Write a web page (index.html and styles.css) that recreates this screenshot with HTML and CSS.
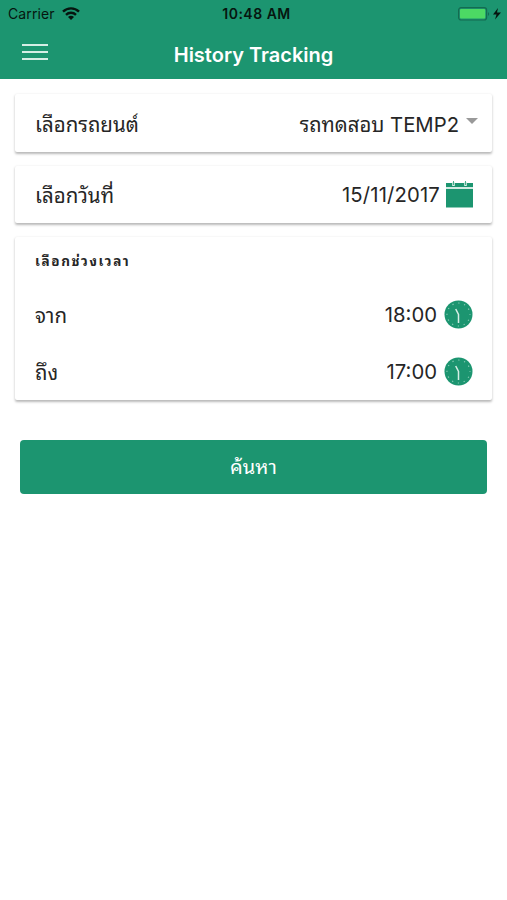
FILE: index.html
```html
<!DOCTYPE html>
<html lang="th">
<head>
    <meta charset="UTF-8">
    <meta name="viewport" content="width=device-width, initial-scale=1.0">
    <title>History Tracking</title>
    <link rel="stylesheet" href="styles.css">
</head>
<body>

    <header>
        <div class="status">
            <div class="carrier">
                <span>Carrier</span>
                <svg width="18" height="13" viewBox="0 0 18 13" fill="none" stroke="#06150f" stroke-width="2.4">
                    <path d="M1 4.6a11.5 11.5 0 0 1 16 0M4 7.8a7.2 7.2 0 0 1 10 0"/>
                    <path d="M9 13L6 10a4.2 4.2 0 0 1 6 0z" fill="#06150f" stroke="none"/>
                </svg>
            </div>
            <div class="time">10:48 AM</div>
            <div class="battery">
                <svg width="44" height="14" viewBox="0 0 44 14">
                    <rect x="0.6" y="0.6" width="28" height="12.4" rx="2.5" fill="none" stroke="#146b50" stroke-width="1.2"/>
                    <rect x="2" y="2" width="25.2" height="9.6" rx="1" fill="#4cd964"/>
                    <path d="M30 5q2.4 2 0 4z" fill="#146b50"/>
                    <path d="M40 1L35 7.5h3.5L37 12.5l6-7h-4z" fill="#06150f"/>
                </svg>
            </div>
        </div>
        <div class="navbar">
            <button class="menu" aria-label="Menu"><i></i><i></i><i></i></button>
            <h1>History Tracking</h1>
        </div>
    </header>

    <main>
        <div class="card row">
            <span class="label">เลือกรถยนต์</span>
            <span class="value">รถทดสอบ TEMP2</span>
            <i class="caret"></i>
        </div>

        <div class="card row date-row">
            <span class="label">เลือกวันที่</span>
            <span class="value">15/11/2017</span>
            <svg class="calendar" width="27" height="27" viewBox="0 0 27 27">
                <path d="M0 2h27v4H0zM0 8h27v18.5H0z" fill="#1c9570"/>
                <path d="M0 7h27" stroke="#bfe3d7" stroke-width="1.4"/>
                <path d="M7.5 1v4M19.5 1v4" stroke="#d9efe7" stroke-width="2.6"/>
                <path d="M7.5 0v4M19.5 0v4" stroke="#4aac8d"/>
            </svg>
        </div>

        <div class="card range">
            <h2>เลือกช่วงเวลา</h2>
            <div class="row">
                <span class="label">จาก</span>
                <span class="value">18:00</span>
                <svg class="clock" width="29" height="29" viewBox="0 0 29 29">
                    <circle cx="14.5" cy="14.5" r="14" fill="#1c9570"/>
                    <circle class="ticks" cx="14.5" cy="14.5" r="11.5"/>
                    <path d="M11.7 9l2.8 5.5V23" fill="none" stroke="#d5eee5" stroke-width="1.5"/>
                </svg>
            </div>
            <div class="row">
                <span class="label">ถึง</span>
                <span class="value">17:00</span>
                <svg class="clock" width="29" height="29" viewBox="0 0 29 29">
                    <circle cx="14.5" cy="14.5" r="14" fill="#1c9570"/>
                    <circle class="ticks" cx="14.5" cy="14.5" r="11.5"/>
                    <path d="M11.7 9l2.8 5.5V23" fill="none" stroke="#d5eee5" stroke-width="1.5"/>
                </svg>
            </div>
        </div>

        <button class="search">ค้นหา</button>
    </main>

</body>
</html>
```
FILE: styles.css
```css
* {
    box-sizing: border-box;
}
body {
    margin: 0;
    background: #fff;
    color: #262626;
    font-family: Inter, "Noto Sans Thai Looped", Loma, Garuda, Waree, serif;
}
header {
    height: 79px;
    background: #1c9570;
}
.status {
    display: grid;
    grid-template-columns: 1fr auto 1fr;
    align-items: center;
    height: 27px;
    padding: 0 5px 0 8px;
    color: #06150f;
    font-size: 14px;
}
.carrier {
    display: flex;
    align-items: center;
    gap: 7px;
    letter-spacing: 0.1px;
}
.time {
    padding-left: 3px;
    font-weight: 600;
    letter-spacing: 0.5px;
}
.battery {
    display: flex;
    justify-content: flex-end;
}
.navbar {
    display: grid;
    grid-template-columns: 70px 1fr 70px;
    align-items: center;
    height: 52px;
}
.menu {
    display: flex;
    flex-direction: column;
    gap: 5px;
    width: 26px;
    margin: -3px 0 0 22px;
    padding: 0;
    border: 0;
    background: none;
}
.menu i {
    width: 26px;
    height: 2px;
    background: #d5eee5;
}
h1 {
    margin: 3px 0 0;
    color: #fff;
    font-size: 20px;
    font-weight: 600;
    text-align: center;
}
main {
    padding: 15px;
}
.card {
    margin-bottom: 14px;
    border-radius: 2px;
    background: #fff;
    box-shadow: 0 1.5px 2.5px rgba(0, 0, 0, 0.28);
}
.row {
    display: flex;
    align-items: center;
    height: 58px;
    padding: 0 19px 0 20px;
}
.label {
    flex: 1;
    margin-top: -2px;
    font-size: 20.5px;
}
.value {
    font-size: 20.3px;
}
.caret {
    margin: -4px -5px 0 7px;
    border: 6px solid transparent;
    border-top-color: #999;
    border-bottom: 0;
}
.date-row {
    height: 57px;
}
.date-row .value {
    letter-spacing: 0.15px;
}
.calendar {
    margin-left: 6px;
}
.range {
    height: 163px;
    padding-top: 13px;
}
.range .row {
    height: 57px;
}
.range h2 {
    height: 22px;
    margin: 0 0 14px 20px;
    font-size: 13.5px;
    line-height: 22px;
    letter-spacing: 1.6px;
}
.clock {
    margin-left: 7px;
}
.ticks {
    fill: none;
    stroke: #8accb6;
    stroke-width: 1.2;
    stroke-dasharray: 1.2 4.82;
    stroke-dashoffset: 0.6;
}
.search {
    display: block;
    width: 467px;
    height: 54px;
    margin: 40px auto 0;
    padding: 0 0 4px;
    border: 0;
    border-radius: 4px;
    background: #1c9570;
    color: #fff;
    font-family: inherit;
    font-size: 20px;
}
```
